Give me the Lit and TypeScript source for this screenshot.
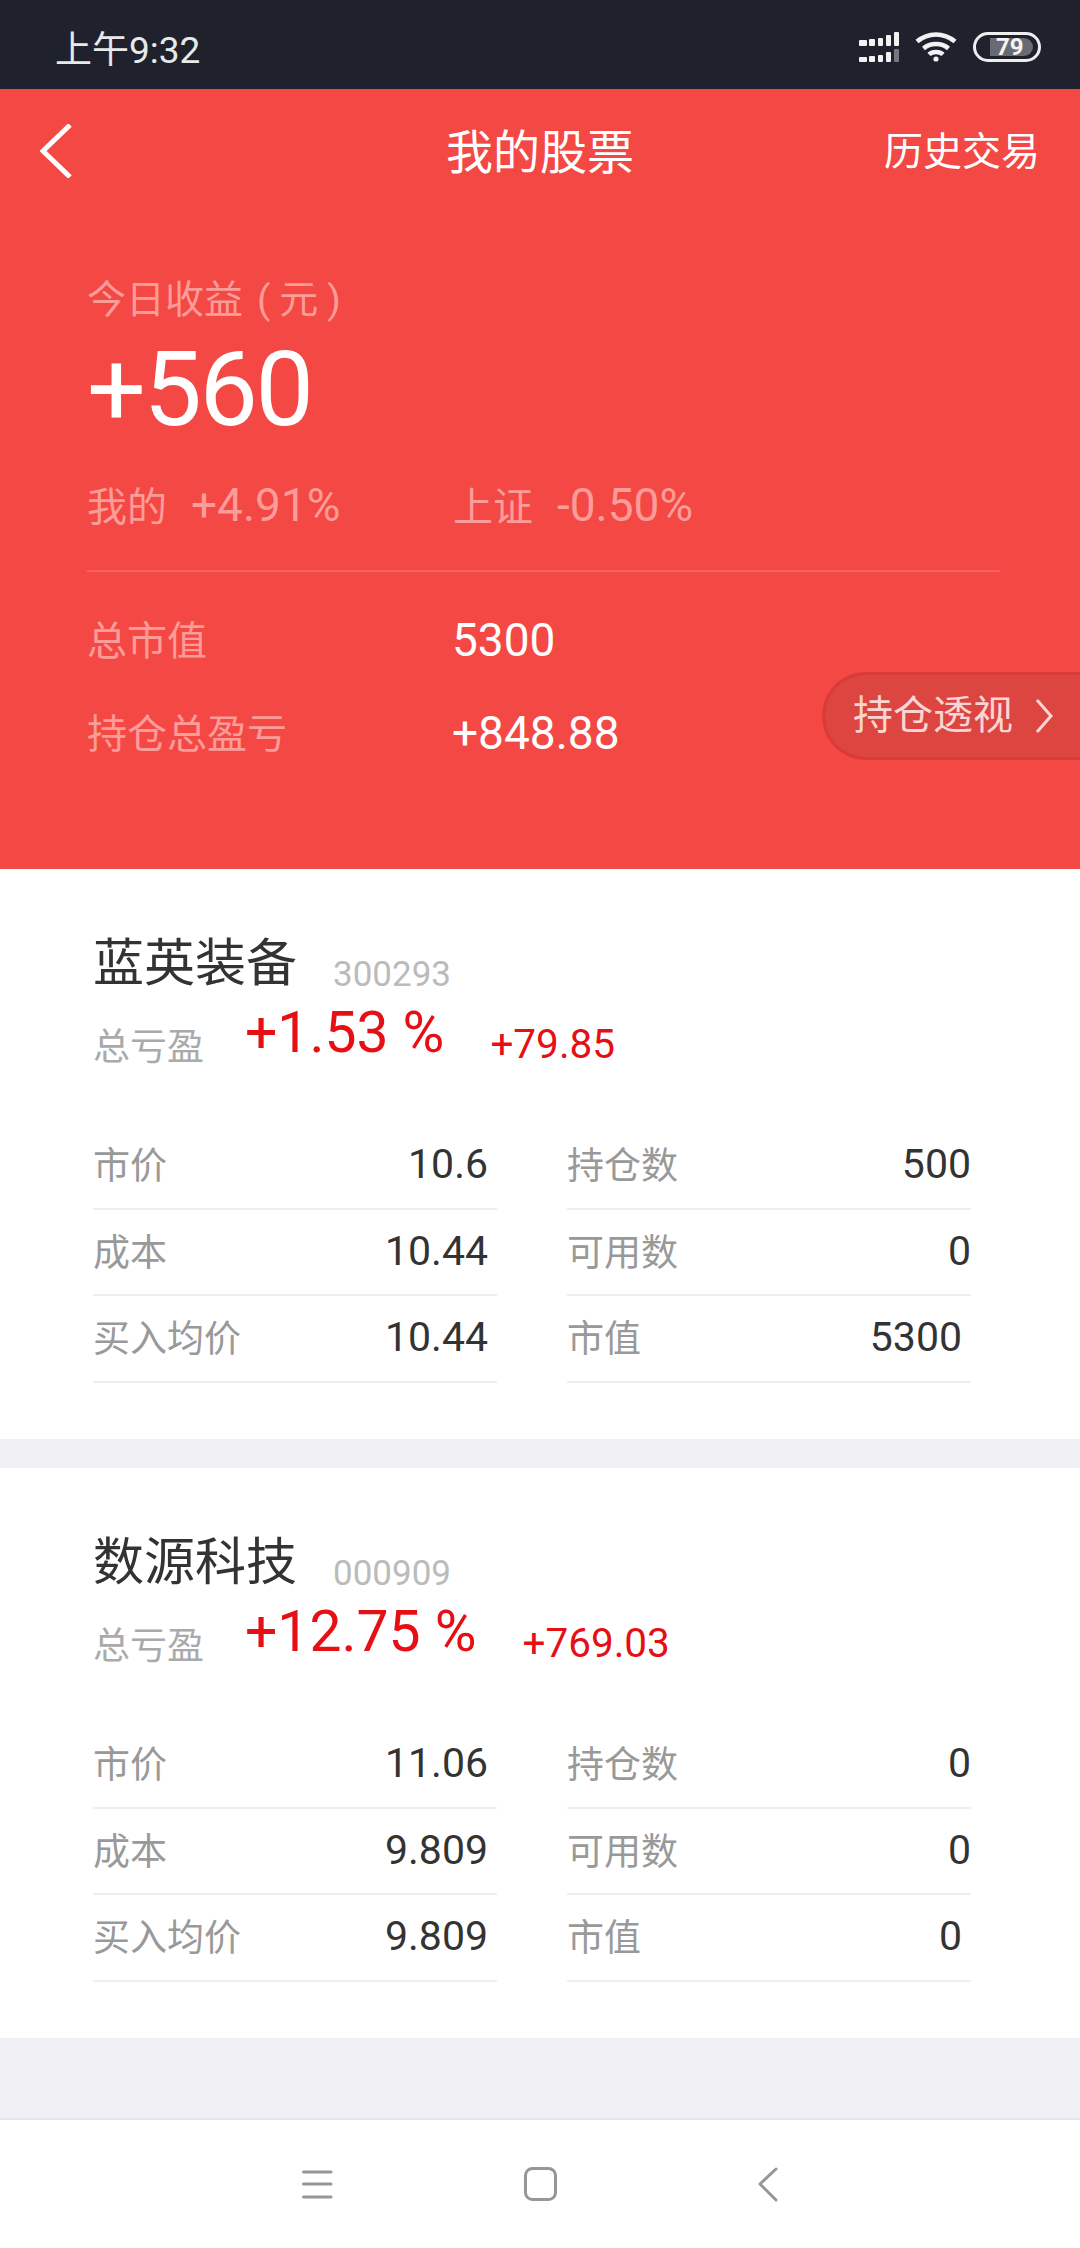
import { LitElement, html, css, svg } from 'lit';
import { customElement } from 'lit/decorators.js';

interface Cell {
    label: string;
    value: string;
    inset?: boolean;
}

interface Stock {
    name: string;
    code: string;
    pct: string;
    gain: string;
    left: Cell[];
    right: Cell[];
}

const STOCKS: Stock[] = [
    {
        name: '蓝英装备',
        code: '300293',
        pct: '+1.53 %',
        gain: '+79.85',
        left: [
            { label: '市价', value: '10.6' },
            { label: '成本', value: '10.44' },
            { label: '买入均价', value: '10.44' },
        ],
        right: [
            { label: '持仓数', value: '500' },
            { label: '可用数', value: '0' },
            { label: '市值', value: '5300', inset: true },
        ],
    },
    {
        name: '数源科技',
        code: '000909',
        pct: '+12.75 %',
        gain: '+769.03',
        left: [
            { label: '市价', value: '11.06' },
            { label: '成本', value: '9.809' },
            { label: '买入均价', value: '9.809' },
        ],
        right: [
            { label: '持仓数', value: '0' },
            { label: '可用数', value: '0' },
            { label: '市值', value: '0', inset: true },
        ],
    },
];

// [x, width, top-row height, bottom-row height] per signal bar
const BARS = [
    [0, 8, 6, 5],
    [10, 6, 7, 6],
    [19, 5, 8, 7],
    [27, 5, 11, 10],
    [35, 5, 14, 13],
];

@customElement('app-root')
export class AppRoot extends LitElement {
    static styles = css`
        :host {
            width: 1080px;
            height: 2248px;
            overflow: hidden;
            background: #efeff4;
            font-family: Roboto, 'Noto Sans CJK SC', sans-serif;
            display: flex;
            flex-direction: column;
        }
        .status {
            height: 89px;
            flex: none;
            background: #1f222d;
            color: #e8e9ea;
            display: flex;
            align-items: center;
            justify-content: space-between;
            padding: 5px 39px 0 55px;
            box-sizing: border-box;
            font-size: 37px;
            font-weight: 400;
        }
        .status-icons {
            display: flex;
            align-items: center;
            gap: 16px;
        }
        .status-icons svg {
            display: block;
        }
        .battery {
            width: 68px;
            height: 30px;
            box-sizing: border-box;
            border: 3px solid #eeeeee;
            border-radius: 15px;
            padding: 3px 5px 3px 14px;
            display: flex;
        }
        .battery-fill {
            flex: 1;
            background: #6a6b72;
            border-radius: 0 9px 9px 0;
            font-size: 24px;
            line-height: 18px;
            font-weight: 700;
            color: #f4f4f4;
            padding-left: 6px;
        }

        .hero {
            position: relative;
            height: 780px;
            flex: none;
            background: #f44844;
            color: #fff;
        }
        .nav {
            height: 126px;
            display: grid;
            grid-template-columns: 1fr auto 1fr;
            align-items: center;
            padding: 0 40px;
        }
        .nav svg {
            display: block;
            margin-bottom: 2px;
        }
        .nav-title {
            font-size: 47px;
            margin-bottom: 8px;
        }
        .nav-link {
            font-size: 39px;
            justify-self: end;
            margin-bottom: 8px;
        }
        .summary {
            padding: 60px 80px 0 87px;
        }
        .muted {
            color: #fc9c99;
        }
        .today {
            font-size: 39px;
            line-height: 50px;
        }
        .paren {
            margin-left: 14px;
            letter-spacing: 9px;
        }
        .big {
            font-size: 104px;
            line-height: 104px;
            letter-spacing: -2.5px;
            margin-top: 13px;
        }
        .compare {
            display: grid;
            grid-template-columns: 366px auto;
            margin-top: 38px;
            line-height: 50px;
        }
        .compare > div {
            display: flex;
            gap: 24px;
            font-size: 40px;
            align-items: baseline;
        }
        .compare b {
            font-weight: 400;
            font-size: 46px;
        }
        .divider {
            height: 2px;
            background: #fa625f;
            margin-top: 37px;
        }
        .totals {
            display: grid;
            grid-template-columns: 365px auto;
            row-gap: 41px;
            margin-top: 43px;
            line-height: 50px;
            font-size: 40px;
        }
        .totals .muted {
            margin-top: 2px;
        }
        .totals b {
            font-weight: 400;
            font-size: 46px;
        }
        .pill {
            position: absolute;
            left: 822px;
            top: 583px;
            width: 258px;
            height: 88px;
            box-sizing: border-box;
            border: 3px solid #d83b38;
            border-right: 0;
            border-radius: 44px 0 0 44px;
            background: #dc4540;
            color: #fbd5d3;
            font-size: 40px;
            display: flex;
            align-items: center;
            padding-left: 28px;
            gap: 22px;
        }
        .pill span {
            margin-bottom: 8px;
        }

        .card {
            height: 570px;
            flex: none;
            box-sizing: border-box;
            background: #fff;
            padding: 65px 109px 0 93px;
        }
        .card + .card {
            margin-top: 29px;
        }
        .card-head {
            display: flex;
            align-items: center;
            gap: 36px;
            height: 60px;
        }
        .name {
            font-size: 51px;
            line-height: 60px;
            color: #333;
        }
        .code {
            font-size: 35px;
            line-height: 34px;
            margin-top: 22px;
            color: #bbb;
        }
        .gain-row {
            display: flex;
            align-items: center;
            height: 60px;
            margin-top: 20px;
        }
        .gain-label {
            font-size: 37px;
            color: #aaa;
            width: 152px;
        }
        .pct {
            font-size: 57px;
            color: #e60f14;
            margin-bottom: 24px;
            margin-right: 46px;
        }
        .gain {
            font-size: 40.500px;
            color: #e60f14;
        }
        .grid {
            display: grid;
            grid-template-columns: 404px 404px;
            column-gap: 70px;
            margin-top: 49px;
        }
        .row {
            height: 86.5px;
            box-sizing: border-box;
            border-bottom: 2px solid #eeeeee;
            display: flex;
            align-items: center;
            justify-content: space-between;
            padding-right: 9px;
            padding-bottom: 4px;
        }
        .right .row {
            padding-right: 0;
        }
        .right .row.inset {
            padding-right: 9px;
        }
        .row span {
            font-size: 37px;
            color: #999;
        }
        .row b {
            font-weight: 400;
            font-size: 41px;
            margin-top: 2px;
            color: #333;
        }

        .spacer {
            flex: 1;
        }
        .sys {
            height: 130px;
            flex: none;
            box-sizing: border-box;
            background: #fff;
            border-top: 2px solid #e6e6e6;
            position: relative;
        }
        .sys svg {
            position: absolute;
            left: 0;
            top: 0;
        }
    `;

    private signal() {
        return html`<svg width="40" height="30" viewBox="0 0 40 30">
            ${BARS.map(([x, w, top, bottom], i) => svg`
                <rect x=${x} y=${14 - top} width=${w} height=${top} fill="#f2f2f2" rx="1"></rect>
                <rect x=${x} y=${30 - bottom} width=${w} height=${bottom}
                    fill=${i === 4 ? '#77787d' : '#f2f2f2'} rx="1"></rect>
            `)}
        </svg>`;
    }

    private wifi() {
        return html`<svg width="42" height="30" viewBox="0 0 42 30" fill="none" stroke="#f2f2f2" stroke-width="4.5">
            <path d="M2 9.5C13 0 29 0 40 9.5"></path>
            <path d="M8.5 16.5C15 10.5 27 10.5 33.5 16.5"></path>
            <path d="M14 22.500C17.5 19 24.500 19 28 22.500"></path>
            <circle cx="21" cy="27" r="2.6" fill="#f2f2f2" stroke="none"></circle>
        </svg>`;
    }

    private renderRow(c: Cell) {
        return html`<div class="row ${c.inset ? 'inset' : ''}">
            <span>${c.label}</span><b>${c.value}</b>
        </div>`;
    }

    private renderStock(s: Stock) {
        return html`<section class="card">
            <div class="card-head">
                <span class="name">${s.name}</span>
                <span class="code">${s.code}</span>
            </div>
            <div class="gain-row">
                <span class="gain-label">总亏盈</span>
                <span class="pct">${s.pct}</span>
                <span class="gain">${s.gain}</span>
            </div>
            <div class="grid">
                <div>${s.left.map((c) => this.renderRow(c))}</div>
                <div class="right">${s.right.map((c) => this.renderRow(c))}</div>
            </div>
        </section>`;
    }

    render() {
        return html`
            <div class="status">
                <span>上午9:32</span>
                <div class="status-icons">
                    ${this.signal()} ${this.wifi()}
                    <div class="battery"><div class="battery-fill">79</div></div>
                </div>
            </div>
            <div class="hero">
                <div class="nav">
                    <svg width="32" height="54" viewBox="0 0 32 54" fill="none" stroke="#fff" stroke-width="5">
                        <path d="M30 1L3 27L30 53"></path>
                    </svg>
                    <span class="nav-title">我的股票</span>
                    <span class="nav-link">历史交易</span>
                </div>
                <div class="summary">
                    <div class="today muted">今日收益<span class="paren">(元)</span></div>
                    <div class="big">+560</div>
                    <div class="compare muted">
                        <div>我的<b>+4.91%</b></div>
                        <div>上证<b>-0.50%</b></div>
                    </div>
                    <div class="divider"></div>
                    <div class="totals">
                        <span class="muted">总市值</span><b>5300</b>
                        <span class="muted">持仓总盈亏</span><b>+848.88</b>
                    </div>
                </div>
                <div class="pill">
                    <span>持仓透视</span>
                    <svg width="18" height="34" viewBox="0 0 18 34" fill="none" stroke="#fbd5d3" stroke-width="3">
                        <path d="M2 1L16 17L2 33"></path>
                    </svg>
                </div>
            </div>
            ${STOCKS.map((s) => this.renderStock(s))}
            <div class="spacer"></div>
            <div class="sys">
                <svg width="1080" height="128" viewBox="0 0 1080 128" fill="none" stroke="#969696" stroke-width="3" stroke-linecap="round">
                    <path d="M303.500 52H331M303.500 64H331M303.500 77H331"></path>
                    <rect x="525.500" y="48.500" width="30" height="31" rx="7"></rect>
                    <path d="M776 49L760 64L776 80" stroke-linejoin="round"></path>
                </svg>
            </div>
        `;
    }
}
